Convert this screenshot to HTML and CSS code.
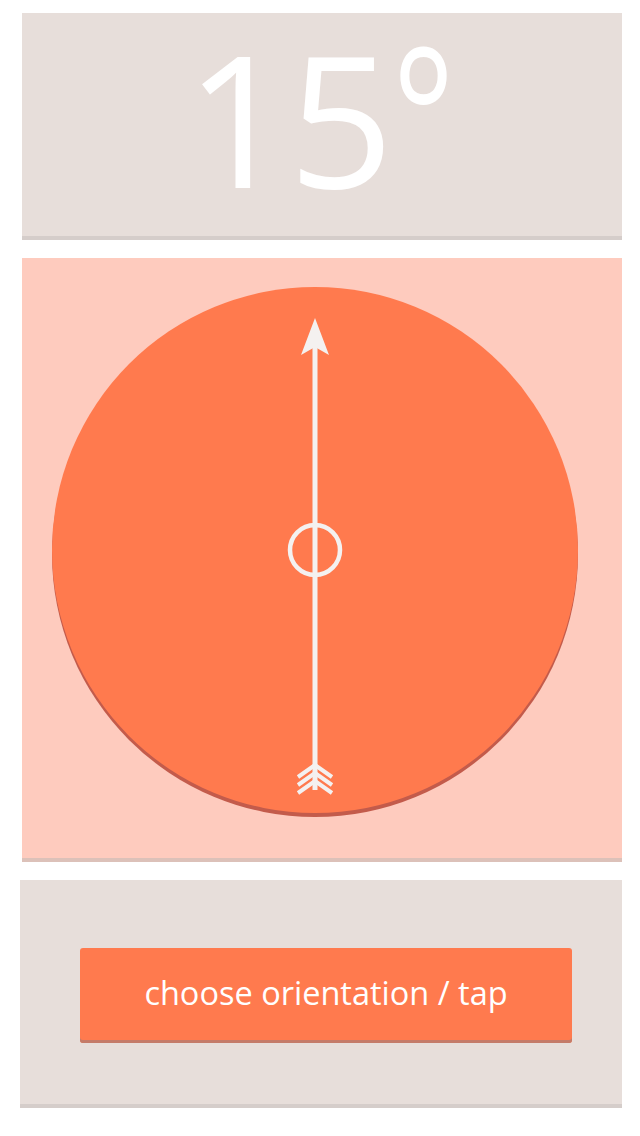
FILE: index.html
```html
<!DOCTYPE html>
<html lang="en">

<head>
    <meta charset="UTF-8">
    <meta name="viewport" content="width=device-width, initial-scale=1.0">
    <title>Orientation</title>
    <link rel="stylesheet" href="styles.css">
</head>

<body>
    <div class="screen">
        <div class="panel angle-panel">
            <div class="angle">15<span class="deg">°</span></div>
        </div>

        <div class="panel dial-panel">
            <svg class="dial" width="600" height="600" viewBox="0 0 600 600">
                <circle cx="293" cy="296" r="263" fill="#c35b4b" />
                <circle cx="293" cy="292" r="263" fill="#ff7a4e" />
                <!-- arrow shaft -->
                <line x1="293" y1="80" x2="293" y2="532" stroke="#f4f1f0" stroke-width="5" />
                <!-- arrow head -->
                <polygon points="293,60 307,97 293,89 279,97" fill="#f4f1f0" />
                <!-- center ring -->
                <circle cx="293" cy="292" r="25" fill="none" stroke="#f4f1f0" stroke-width="4.5" />
                <!-- fletching -->
                <g fill="none" stroke="#f4f1f0" stroke-width="4">
                    <polyline points="276,519 293,507 310,519" />
                    <polyline points="276,527 293,515 310,527" />
                    <polyline points="276,535 293,523 310,535" />
                </g>
            </svg>
        </div>

        <div class="panel action-panel">
            <button class="tap-button">choose orientation / tap</button>
        </div>
    </div>
</body>

</html>
```

FILE: styles.css
```css
body {
    margin: 0;
    background: #ffffff;
    font-family: "Open Sans", "Noto Sans", sans-serif;
}

.screen {
    display: flex;
    flex-direction: column;
    gap: 18px;
    padding-top: 13px;
}

.panel {
    box-sizing: border-box;
    margin-left: 22px;
    width: 600px;
    border-bottom: 4px solid #d5cdca;
}

.angle-panel {
    height: 227px;
    background: #e7deda;
    display: flex;
    justify-content: center;
    align-items: center;
}

.angle {
    color: #ffffff;
    font-size: 184px;
    font-weight: 400;
    line-height: 1.1;
    letter-spacing: -2px;
    margin-top: -14px;
}

.deg {
    display: inline-block;
    transform: scale(0.8, 1.05);
    transform-origin: left bottom;
    margin-right: -10px;
}

.dial-panel {
    height: 604px;
    background: #fecbbe;
    border-bottom-color: #dcc1b9;
}

.dial {
    display: block;
}

.action-panel {
    margin-left: 20px;
    width: 602px;
    height: 228px;
    background: #e7deda;
    padding: 68px 50px 0 60px;
}

.tap-button {
    display: block;
    width: 100%;
    height: 95px;
    border: none;
    border-radius: 3px;
    background: #ff7a4e;
    box-shadow: inset 0 -3px 0 #c47b69;
    color: #ffffff;
    font-family: "Open Sans", "Noto Sans", sans-serif;
    font-size: 32.5px;
    padding: 0 0 6px;
    cursor: pointer;
}
```
